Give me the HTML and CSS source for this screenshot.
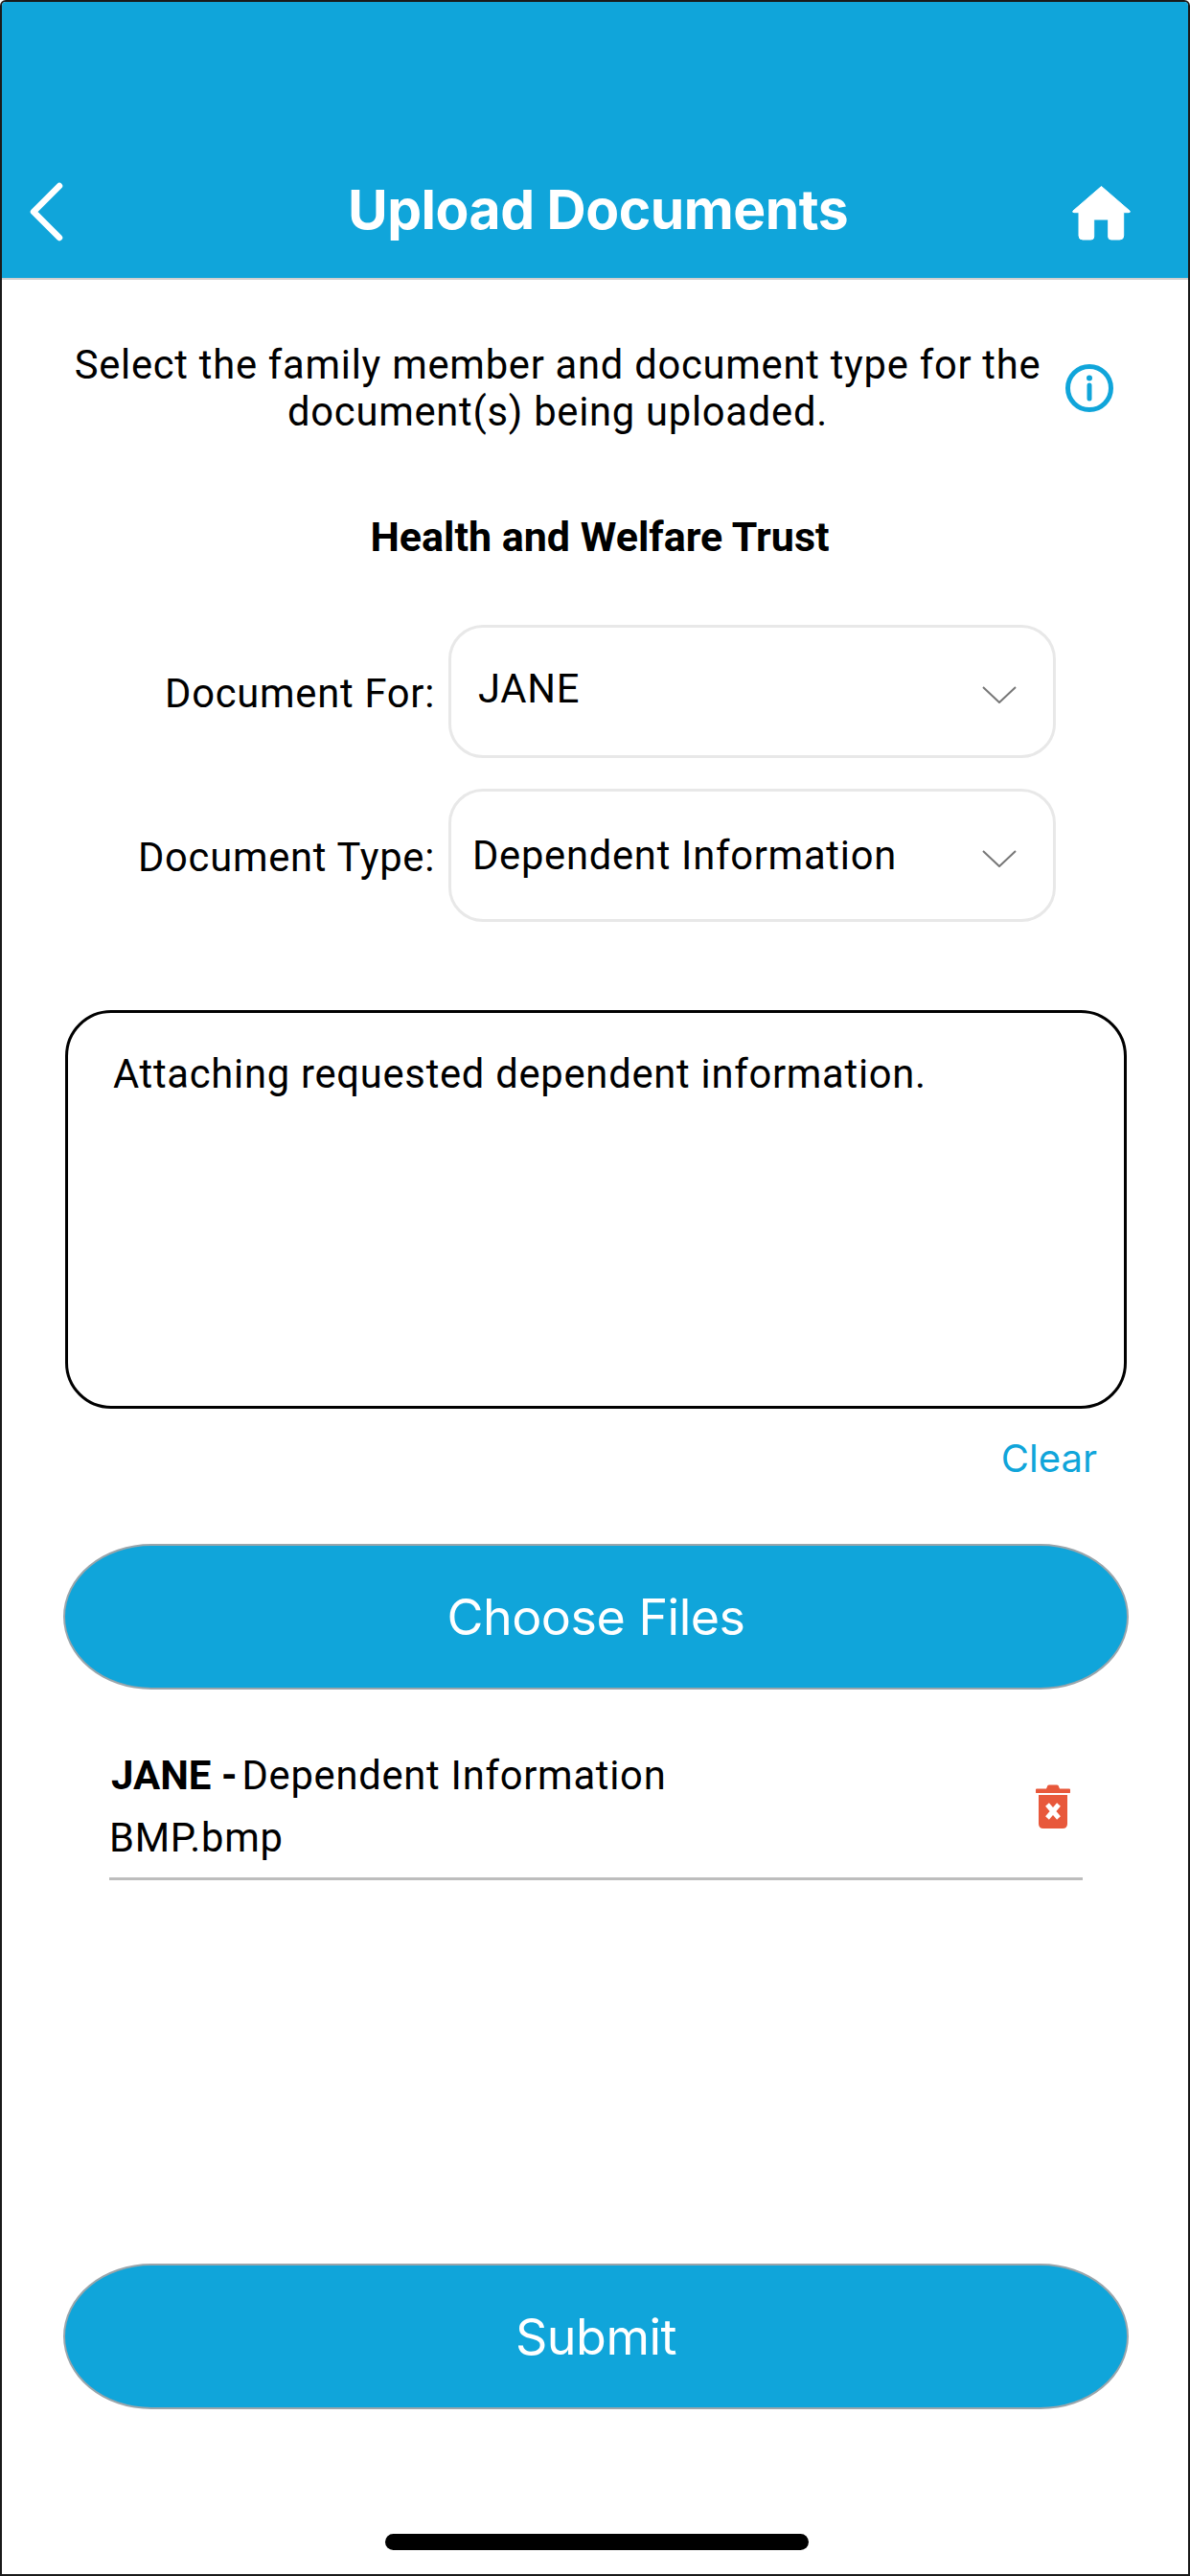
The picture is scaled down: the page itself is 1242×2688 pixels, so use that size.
FILE: index.html
```html
<!DOCTYPE html>
<html lang="en">
<head>
<meta charset="utf-8">
<title>Upload Documents</title>
<link rel="stylesheet" href="styles.css">
</head>
<body>
<div class="app">
  <header class="topbar">
    <svg class="back" viewBox="0 0 40 64" width="40" height="64"><path d="M36 5 L9 32 L36 59" fill="none" stroke="#fff" stroke-width="6.5" stroke-linecap="round" stroke-linejoin="round"/></svg>
    <h1 class="title">Upload Documents</h1>
    <svg class="home" viewBox="0 0 63 58" width="63" height="58"><path d="M30.500 1.500 L60 27 Q61 28.700 59 28.700 H53.700 V53 Q53.700 57 49.700 57 H40.700 Q37.700 57 37.700 54 V36 H22.700 V54 Q22.700 57 19.700 57 H11 Q7 57 7 53 V28.700 H2 Q0 28.700 1 27 Z" fill="#fff" stroke="#fff" stroke-width="1" stroke-linejoin="round"/></svg>
  </header>
  <main class="content">
    <div class="intro">
      <p class="intro-text">Select the family member and document type for the document(s) being uploaded.</p>
      <svg class="info" viewBox="0 0 52 52" width="52" height="52"><circle cx="26" cy="26" r="22.500" fill="none" stroke="#10a5da" stroke-width="5"/><circle cx="26" cy="15.500" r="3" fill="#10a5da"/><path d="M26 23 V37" stroke="#10a5da" stroke-width="5" stroke-linecap="round"/></svg>
    </div>
    <h2 class="org">Health and Welfare Trust</h2>
    <div class="field">
      <label class="field-label">Document For:</label>
      <div class="select">
        <span class="select-value value-for">JANE</span>
        <svg class="caret" viewBox="0 0 36 18" width="36" height="18"><path d="M1 1 L18 17 L35 1" fill="none" stroke="#777" stroke-width="2"/></svg>
      </div>
    </div>
    <div class="field">
      <label class="field-label">Document Type:</label>
      <div class="select">
        <span class="select-value value-type">Dependent Information</span>
        <svg class="caret" viewBox="0 0 36 18" width="36" height="18"><path d="M1 1 L18 17 L35 1" fill="none" stroke="#777" stroke-width="2"/></svg>
      </div>
    </div>
    <div class="notes">Attaching requested dependent information.</div>
    <div class="clear-row"><span class="clear">Clear</span></div>
    <button class="pill choose" type="button">Choose Files</button>
    <div class="file">
      <div class="file-text">
        <div class="file-head"><b class="file-who">JANE -</b><span>Dependent Information</span></div>
        <div class="file-name">BMP.bmp</div>
      </div>
      <svg class="trash" viewBox="0 0 36 46" width="36" height="46"><path d="M1 4.500 H11 L12.500 1 Q13 .5 14 .5 H22 Q23 .5 23.500 1 L25 4.500 H35 Q36 4.500 36 5.500 V8.500 Q36 9 35 9 H1 Q0 9 0 8.500 V5.500 Q0 4.500 1 4.500 Z M3 11 H33 V41 Q33 46 28 46 H8 Q3 46 3 41 Z" fill="#e8583b"/><path d="M12 21 L24 35 M24 21 L12 35" stroke="#fff" stroke-width="5"/></svg>
    </div>
    <button class="pill submit" type="button">Submit</button>
    <div class="home-indicator"></div>
  </main>
</div>
</body>
</html>
```
FILE: styles.css
```css
* { box-sizing: border-box; }
html, body { margin: 0; padding: 0; background: #fff; }
body { width: 1242px; height: 2688px; overflow: hidden; font-family: Roboto, "Liberation Sans", sans-serif; color: #000; }
.app { width: 1242px; height: 2688px; border: 2px solid #1a1a1a; border-radius: 6px 6px 0 0; display: flex; flex-direction: column; overflow: hidden; background: #fff; }
.topbar { height: 290px; flex: none; background: #10a5da; border-bottom: 2px solid #cfcfcf; display: flex; align-items: flex-start; padding: 188px 58px 0 24px; }
.back { flex: none; margin-top: -1px; }
.title { flex: 1; margin: -3px 0 0; padding-left: 63px; text-align: center; font-family: Inter, sans-serif; font-weight: 700; font-size: 57px; line-height: 64px; color: #fff; letter-spacing: -.5px; }
.home { flex: none; margin-top: 3px; }
.content { flex: 1; display: flex; flex-direction: column; min-height: 0; }
.intro { display: flex; align-items: center; margin-top: 64px; padding-left: 70px; }
.intro-text { margin: 0; width: 1020px; text-align: center; font-size: 41.700px; line-height: 49px; letter-spacing: .75px; }
.info { flex: none; margin-left: 19px; }
.org { margin: 82px 0 0; padding-left: 10px; text-align: center; font-weight: 700; font-size: 43px; line-height: 48px; }
.field { display: flex; align-items: center; margin-top: 32px; padding-left: 66px; }
.org + .field { margin-top: 68px; }
.field-label { width: 386px; text-align: right; font-size: 41.700px; letter-spacing: .75px; padding-top: 3px; }
.select { margin-left: 14px; width: 634px; height: 139px; border: 3px solid #e8e8e8; border-radius: 36px; display: flex; align-items: center; justify-content: space-between; padding-right: 38px; }
.select-value { font-size: 41.700px; letter-spacing: .75px; }
.value-for { padding-left: 28px; margin-top: -6px; }
.value-type { padding-left: 22px; }
.caret { flex: none; margin-top: 7px; }
.notes { margin: 92px 0 0 66px; width: 1108px; height: 416px; border: 3px solid #000; border-radius: 48px; padding: 40px 47px; font-size: 41.700px; line-height: 48px; letter-spacing: .75px; }
.clear-row { display: flex; justify-content: flex-end; padding-right: 95px; margin-top: 29px; }
.clear { font-family: Inter, sans-serif; font-size: 40px; line-height: 46px; color: #10a5da; }
.pill { display: block; flex: none; margin-left: 64px; width: 1112px; height: 152px; border: 2px solid #9aa5ab; border-radius: 92px / 76px; background: #10a5da; color: #fff; font-family: Inter, sans-serif; font-size: 52px; font-weight: 400; letter-spacing: -.5px; }
.choose { margin-top: 66px; }
.file { margin: 65px 0 0 112px; width: 1016px; height: 134px; border-bottom: 3px solid #bdbdbd; display: flex; justify-content: space-between; align-items: flex-start; }
.file-head { font-size: 41.700px; line-height: 50px; letter-spacing: .75px; padding-left: 2px; }
.file-who { font-weight: 700; font-size: 42px; margin-right: 5px; letter-spacing: 0; }
.file-name { font-size: 41.700px; line-height: 50px; margin-top: 15px; letter-spacing: .75px; }
.trash { flex: none; margin: 34px 13px 0 0; }
.submit { margin-top: 400px; }
.home-indicator { flex: none; margin: 130px 0 0 400px; width: 442px; height: 17px; border-radius: 9px; background: #000; }
```
